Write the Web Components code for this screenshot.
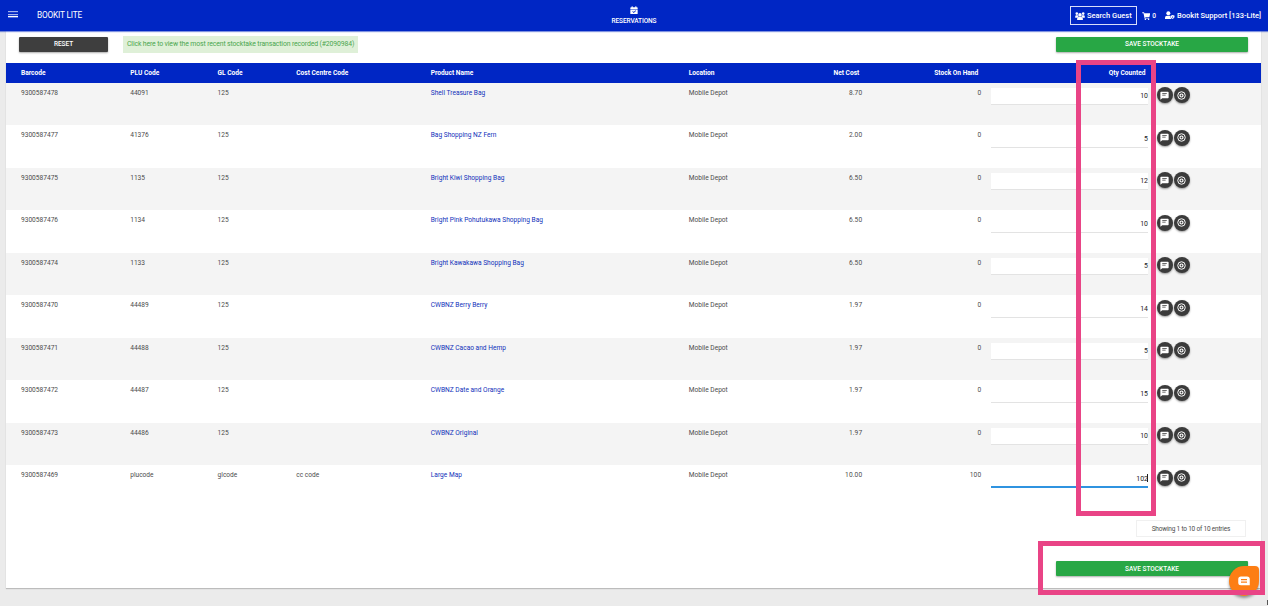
<!DOCTYPE html>
<html lang="en">
<head>
<meta charset="utf-8">
<title>Bookit Lite - Stocktake</title>
<style>
html,body{margin:0;height:606px;overflow:hidden;background:#ebebeb}
body{font-family:Roboto,sans-serif;font-size:6.6px;color:#4c4c4c}
</style>
</head>
<body>
<stocktake-app></stocktake-app>
<script>
const icons = {
  menu:'<path d="M0 2h30M0 11h30" stroke="#c3ccf5" stroke-width="3" fill="none"/><path d="M0 17h30" stroke="#fff" stroke-width="4" fill="none"/>',
  calendar:'<path fill="#fff" fill-rule="evenodd" d="M5 0h3v3h8V0h3v3h2q2 0 2 2v3H1V5q0-2 2-2h2zM1 9.500h22V22q0 2-2 2H3q-2 0-2-2zM7 15.500l4 4.500 7-6-1.400-1.700-5.300 4.700-2.600-3z"/>',
  users:'<g fill="#fff"><circle cx="5" cy="5" r="4"/><circle cx="25" cy="5" r="4"/><circle cx="15" cy="9" r="5.500"/><path d="M0 17v-3q0-4 4-4h3q1.500 0 2.500 1-.5 3 1.300 4Q7 16 6.400 18H0zM30 17v-3q0-4-4-4h-3q-1.500 0-2.500 1 .5 3-1.300 4 3.800 1 4.400 3H30zM6 25v-4q0-5 5-5h8q5 0 5 5v4z"/></g>',
  cart:'<g fill="#fff"><path d="M0 1h5.500l.8 3H24l-2.500 11H9l.5 2H21v2.500H7L3.800 3.500H0z"/><circle cx="9.500" cy="22" r="2.200"/><circle cx="19" cy="22" r="2.200"/></g>',
  user:'<g fill="#fff"><circle cx="10" cy="6.500" r="6"/><path d="M0 24v-4q0-6 6-6h8q1.500 0 2.500.6-.6 5.400 3.500 9.400z"/><path fill-rule="evenodd" d="M23 12l6 2.300q.5 6.700-6 9.700-6.500-3-6-9.700zm0 4a2 2 0 1 0 0 4 2 2 0 1 0 0-4z"/></g>',
  note:'<path fill="#fff" fill-rule="evenodd" d="M3 2h18q2 0 2 2v13q0 2-2 2H6l-5 4V4q0-2 2-2zM6 6v2h12V6zM6 10v2h9v-2z"/>',
  cancel:'<circle cx="12" cy="12" r="10" fill="none" stroke="#fff" stroke-width="2.600"/><circle cx="12" cy="12" r="4" fill="none" stroke="#fff" stroke-width="3.200"/>'
};
const svg = (name, w, h, vb='0 0 24 24') => `<svg width="${w}" height="${h}" viewBox="${vb}">${icons[name]}</svg>`;

function define(name, render){
  customElements.define(name, class extends HTMLElement{
    connectedCallback(){
      if(!this.shadowRoot) this.attachShadow({mode:'open'}).innerHTML = render(this);
    }
  });
}

define('app-bar', () => `
<style>
:host{display:grid;grid-template-columns:1fr auto 1fr;height:31px;background:#0026c4;color:#fff;box-shadow:0 1px 1px #0026c480;position:relative;align-items:start}
svg{display:block;flex:none}
.left{display:flex;padding-left:8.400px}
.left svg{margin-top:11px}
.brand{font-size:8.300px;line-height:12px;margin:9px 0 0 18.600px;letter-spacing:-.18px;white-space:nowrap}
.mid{display:flex;flex-direction:column;align-items:center;padding-top:5.500px;font-size:6.500px;font-weight:500;line-height:10px;letter-spacing:-.1px}
.mid span{margin-top:2px}
.right{display:flex;justify-content:flex-end;align-items:center;height:19px;margin-top:6px;padding-right:7px;font-size:7.500px;font-weight:500;line-height:10px;white-space:nowrap}
.search{display:flex;align-items:center;box-sizing:border-box;width:67px;height:19px;border:1px solid #d8defa;padding-left:4px;gap:1.600px;margin-right:4.500px}
.cart{display:flex;align-items:center;gap:2px;margin-right:9px;font-size:6.600px}
.user{display:flex;align-items:center;gap:2px}
</style>
<div class="left">${svg('menu',10,7,'0 0 30 21')}<span class="brand">BOOKIT LITE</span></div>
<div class="mid">${svg('calendar',8,8.5)}<span>RESERVATIONS</span></div>
<div class="right"><div class="search">${svg('users',10,8,'0 0 30 25')}<span>Search Guest</span></div>
<div class="cart">${svg('cart',8.5,8)}<span>0</span></div>
<div class="user">${svg('user',10,8.5,'0 0 30 25')}<span>Bookit Support [133-Lite]</span></div></div>`);

define('action-button', () => `
<style>
:host{display:flex;align-items:center;justify-content:center;box-sizing:border-box;height:15.500px;width:var(--w,192px);background:var(--bg,#28a745);color:#fff;font-weight:500;font-size:6.500px;line-height:10px;letter-spacing:var(--ls,.01px);border-radius:1px;box-shadow:0 1px 2px #0005}
</style><slot></slot>`);

define('round-button', el => `
<style>
:host{display:grid;place-items:center;width:16px;height:16px;border-radius:50%;background:#3b3b3b;box-shadow:0 1px 2px #0006}
svg{display:block}
</style>${svg(el.getAttribute('icon'),9,9)}`);

define('qty-field', el => `
<style>
:host{display:block;box-sizing:border-box;width:157.500px;height:17px;background:#fff;border-bottom:1px solid #e3e3e3;text-align:right;color:#222;font-size:6.900px;line-height:17px;letter-spacing:.1px}
:host([focused]){border-bottom:2px solid #2f93e0}
i{display:inline-block;width:1px;height:8px;background:#222;vertical-align:-1.500px;margin-left:-1px}
</style><slot></slot>${el.hasAttribute('focused')?'<i></i>':''}`);

const columns = '109.200px 87.400px 78.700px 134.500px 258px 100px 73.500px 119px 9.500px 157.500px 9.200px auto';

define('stock-head', () => `
<style>
:host{display:grid;grid-template-columns:${columns};align-items:center;height:19.500px;padding-left:15px;background:#0026c4;color:#fff;font-weight:700;font-size:6.600px;box-sizing:border-box;white-space:nowrap}
.n{text-align:right;padding-right:3px}
.q{grid-column:10;text-align:right;padding-right:2.800px}
</style>
<span>Barcode</span><span>PLU Code</span><span>GL Code</span><span>Cost Centre Code</span><span>Product Name</span><span>Location</span><span class="n">Net Cost</span><span class="n">Stock On Hand</span><span class="q">Qty Counted</span>`);

define('stock-row', el => {
  const [barcode, plu, gl, cc, product, net, stock, qty] = el.data;
  return `
<style>
:host{display:grid;grid-template-columns:${columns};height:42.500px;padding:0 0 0 15px;box-sizing:border-box;align-items:start;white-space:nowrap;line-height:10px}
span{padding-top:4.600px}
a{padding-top:4.600px;color:#1030ba}
.n{text-align:right;letter-spacing:.12px}
qty-field{grid-column:10;margin:5.200px 0 0 -.2px}
.buttons{grid-column:12;display:flex;gap:1px;margin:4.100px 0 0 -.8px}
</style>
<span>${barcode}</span><span>${plu}</span><span>${gl}</span><span>${cc}</span><a>${product}</a><span>Mobile Depot</span><span class="n">${net}</span><span class="n">${stock}</span>
<qty-field ${qty==='102'?'focused':''}>${qty}</qty-field>
<div class="buttons"><round-button icon="note"></round-button><round-button icon="cancel"></round-button></div>`;
});

const rows = [
  ['9300587478','44091','125','','Shell Treasure Bag','8.70','0','10'],
  ['9300587477','41376','125','','Bag Shopping NZ Fern','2.00','0','5'],
  ['9300587475','1135','125','','Bright Kiwi Shopping Bag','6.50','0','12'],
  ['9300587476','1134','125','','Bright Pink Pohutukawa Shopping Bag','6.50','0','10'],
  ['9300587474','1133','125','','Bright Kawakawa Shopping Bag','6.50','0','5'],
  ['9300587470','44489','125','','CWBNZ Berry Berry','1.97','0','14'],
  ['9300587471','44488','125','','CWBNZ Cacao and Hemp','1.97','0','5'],
  ['9300587472','44487','125','','CWBNZ Date and Orange','1.97','0','15'],
  ['9300587473','44486','125','','CWBNZ Original','1.97','0','10'],
  ['9300587469','plucode','glcode','cc code','Large Map','10.00','100','102']
];

customElements.define('stock-table', class extends HTMLElement{
  connectedCallback(){
    const root = this.attachShadow({mode:'open'});
    root.innerHTML = `<style>:host{display:block}stock-row:nth-of-type(odd){background:#f4f4f4}</style><stock-head></stock-head>`;
    for(const data of rows){
      const row = document.createElement('stock-row');
      row.data = data;
      root.append(row);
    }
  }
});

define('chat-launcher', () => `
<style>
:host{display:grid;place-items:center;width:30px;height:30px;background:#fd7e14;border-radius:15px 4px 15px 15px;box-shadow:0 2px 3px #0006}
svg{display:block}
</style>
<svg width="12" height="10" viewBox="0 0 24 20"><path fill="#fff" fill-rule="evenodd" d="M6 1h12q5.500 0 5.500 5v12.500H6q-5.500 0-5.500-5V6Q.5 1 6 1zM6 6v2.400h12V6zM6 11v2.400h12V11z"/></svg>`);

define('highlight-frame', () => `<style>:host{display:block;box-sizing:border-box;border:5px solid #e94486;position:absolute;pointer-events:none}</style>`);

define('stocktake-app', () => `
<style>
:host{display:block;position:relative;width:1268px;height:606px;overflow:hidden}
.card{box-sizing:border-box;margin:0 6.600px 0 6px;height:557px;background:#fff;box-shadow:0 1px 1px #0003}
.tools{display:flex;height:32.450px;padding:5.500px 13.400px 0 13px;box-sizing:border-box;align-items:flex-start}
.reset{--w:89px;--bg:#3e3e3e;--ls:-.05px}
.notice{box-sizing:border-box;height:17px;width:235px;margin:-.5px auto 0 15px;padding-left:4px;background:#dff0d8;color:#4aa64e;font-size:6.870px;letter-spacing:-.125px;line-height:17px;white-space:nowrap}
.info{display:flex;margin:12px 15.500px 0 auto;width:110px;height:17.500px;box-sizing:border-box;border:1px solid #f0f0f0;align-items:center;justify-content:center;font-size:6.500px;letter-spacing:-.2px;white-space:nowrap}
.bottom{margin:23.500px 13.400px 0 auto}
.qty{left:1076px;top:60px;width:80px;height:456px}
.save{left:1038px;top:541px;width:227px;height:54px}
chat-launcher{position:absolute;left:1229px;top:566px}
.corner{position:absolute;right:0;top:600px;width:1px;height:5px;background:#555}
</style>
<app-bar></app-bar>
<div class="card">
<div class="tools"><action-button class="reset">RESET</action-button><div class="notice">Click here to view the most recent stocktake transaction recorded (#2090984)</div><action-button>SAVE STOCKTAKE</action-button></div>
<stock-table></stock-table>
<div class="info">Showing 1 to 10 of 10 entries</div>
<action-button class="bottom">SAVE STOCKTAKE</action-button>
</div>
<chat-launcher></chat-launcher>
<highlight-frame class="qty"></highlight-frame>
<highlight-frame class="save"></highlight-frame>
<div class="corner"></div>`);
</script>
</body>
</html>
